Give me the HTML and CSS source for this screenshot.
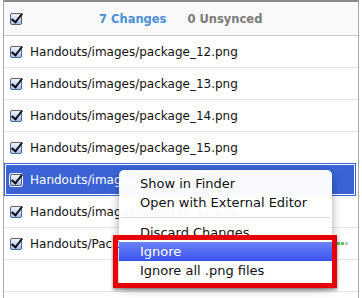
FILE: index.html
```html
<!DOCTYPE html>
<html>
<head>
    <title>Changes</title>
    <link rel="stylesheet" href="styles.css">
</head>
<body>
    <div class="window">
        <div class="header">
            <span class="box"></span>
            <span class="changes">7 Changes</span>
            <span class="unsynced">0 Unsynced</span>
        </div>
        <ul class="files">
            <li class="row"><span class="box"></span>Handouts/images/package_12.png</li>
            <li class="row"><span class="box"></span>Handouts/images/package_13.png</li>
            <li class="row"><span class="box"></span>Handouts/images/package_14.png</li>
            <li class="row"><span class="box"></span>Handouts/images/package_15.png</li>
            <li class="row selected"><span class="box"></span>Handouts/images/package_16.png</li>
            <li class="row"><span class="box"></span>Handouts/images/package_17.png</li>
            <li class="row"><span class="box"></span>Handouts/Package.zip
                <span class="progress"><i class="on"></i><i class="on"></i><i></i></span>
            </li>
            <li class="row"></li>
            <li class="row"></li>
        </ul>

        <div class="menu">
            <div class="item">Show in Finder</div>
            <div class="item">Open with External Editor</div>
            <div class="sep"></div>
            <div class="item">Discard Changes</div>
            <div class="item active">Ignore</div>
            <div class="item">Ignore all .png files</div>
        </div>
        <div class="callout"></div>
    </div>
</body>
</html>
```

FILE: styles.css
```css
body {
    margin: 0;
    background: #fff;
    font-family: "DejaVu Sans", Verdana, sans-serif;
    height: 298px;
    overflow: hidden;
}
.window {
    position: relative;
    margin-left: 3px;
    width: 354px;
    border-top: 2px solid #8c8c8c;
    border-left: 1px solid #a8a8a8;
    border-right: 1px solid #a8a8a8;
}
.header {
    display: flex;
    align-items: center;
    height: 33px;
    padding-left: 6px;
    background: #f9f9f9;
    border-bottom: 1px solid #cbcbcb;
    font-size: 11.5px;
    font-weight: bold;
}
.changes {
    margin-left: 69px;
    color: #4b8fd6;
}
.unsynced {
    margin-left: 21px;
    color: #7a7a7a;
}
/* checkbox drawn with css, tick is a rotated border */
.box {
    position: relative;
    flex: none;
    width: 10px;
    height: 10px;
    margin-right: 8px;
    border: 1px solid #56637e;
    border-radius: 2px;
    background: linear-gradient(#eef4fd, #a6c1ec);
}
.box::after {
    content: "";
    position: absolute;
    left: 3px;
    top: -3px;
    width: 4px;
    height: 10px;
    border-right: 2px solid #111;
    border-bottom: 2px solid #111;
    transform: rotate(38deg);
}
.selected .box {
    box-shadow: 0 0 0 1px #fff;
}
.files {
    list-style: none;
    margin: 0;
    padding: 0;
}
.row {
    display: flex;
    align-items: center;
    height: 31px;
    padding-left: 6px;
    border-bottom: 1px solid #e4e4e4;
    font-size: 12px;
    color: #111;
}
.row.selected {
    margin-top: -1px;
    margin-right: 2px;
    padding-left: 5px;
    border: 1px solid #3b63d6;
    background: #3b63d6;
    box-shadow: inset 0 0 0 1px #fff;
    color: #fff;
}
.progress {
    display: flex;
    gap: 1px;
    margin-left: auto;
    margin-right: 10px;
}
.progress i {
    width: 3px;
    height: 3px;
    background: #c4c4c4;
}
.progress i.on {
    background: #4fcf5a;
}
.menu {
    position: absolute;
    left: 115px;
    top: 168px;
    width: 213px;
    padding: 4px 0 6px;
    background: rgba(255, 255, 255, 0.97);
    border-radius: 5px;
    box-shadow: 0 3px 10px rgba(0, 0, 0, 0.35);
    font-size: 13px;
    color: #111;
}
.item {
    height: 19px;
    line-height: 19px;
    padding-left: 21px;
}
.item.active {
    background: linear-gradient(#6b84f8, #3a52ee);
    color: #fff;
}
.sep {
    height: 1px;
    margin: 5px 2px;
    background: #dcdcdc;
}
.callout {
    position: absolute;
    left: 109px;
    top: 233px;
    width: 214px;
    height: 43px;
    border: 5px solid #e6000a;
    box-shadow: 0 2px 3px rgba(0, 0, 0, 0.4);
}
```
